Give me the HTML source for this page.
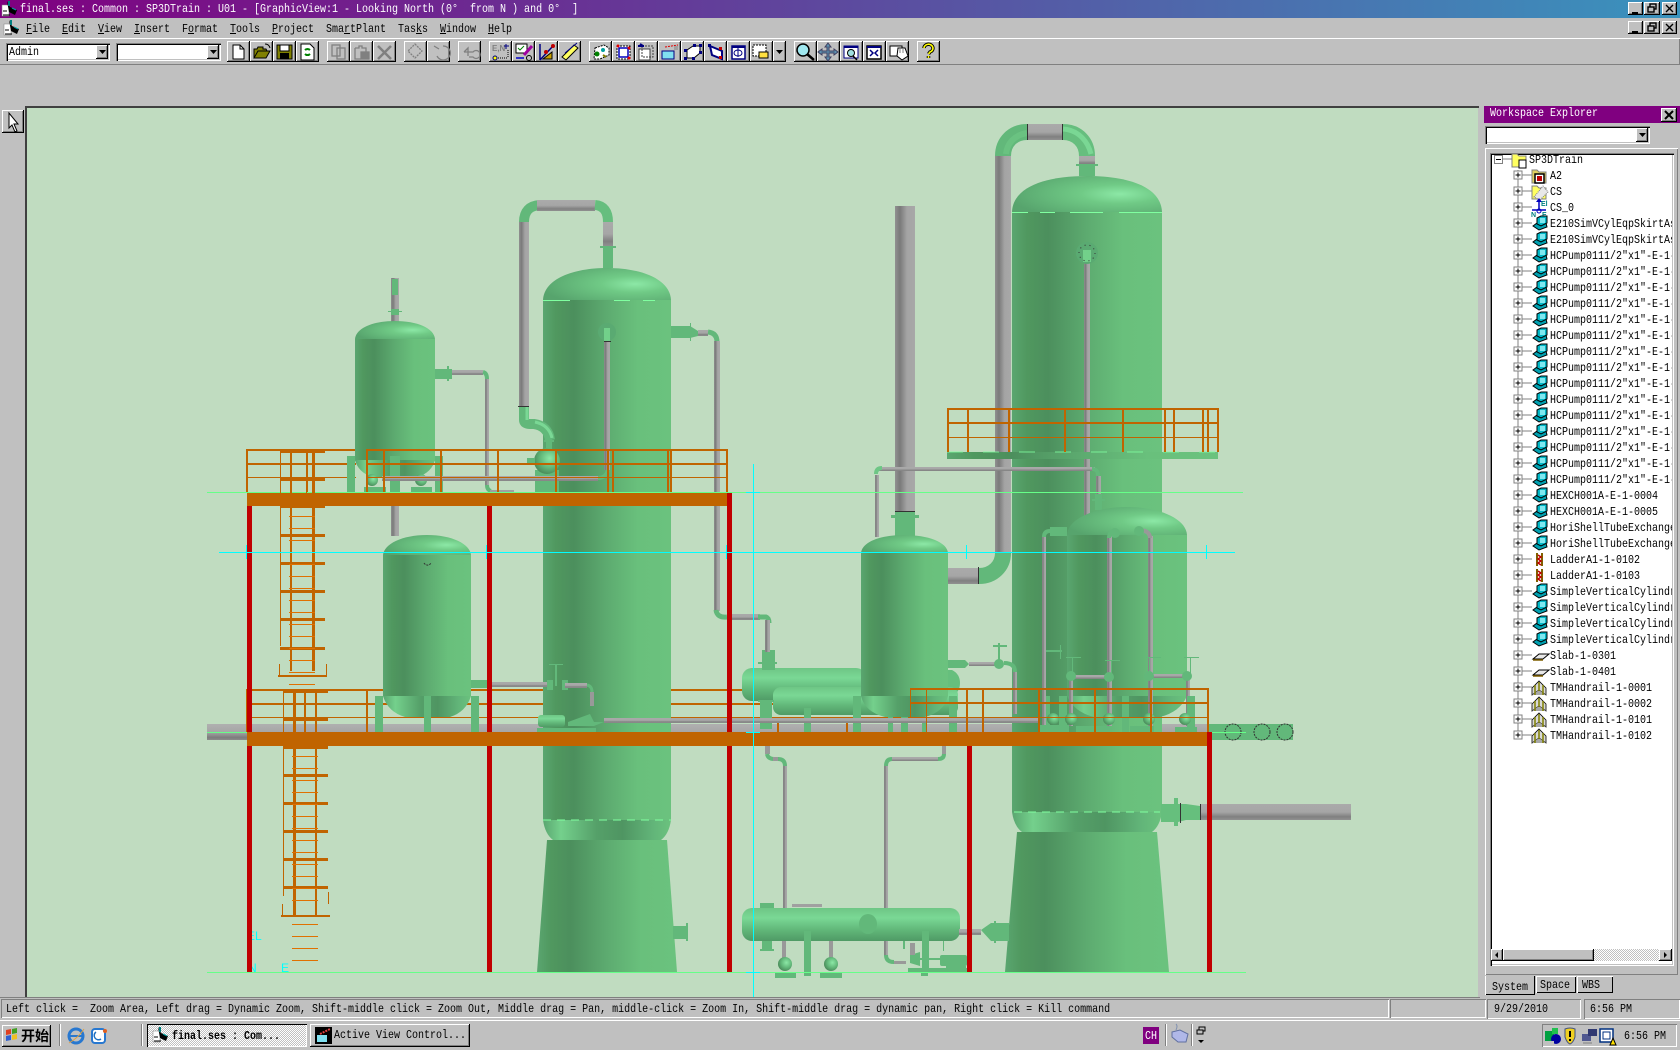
<!DOCTYPE html>
<html><head><meta charset="utf-8"><title>final.ses</title>
<style>
html,body{margin:0;padding:0;width:1680px;height:1050px;overflow:hidden;background:#c0c0c0}
#s{position:absolute;left:0;top:0}
.t{position:absolute;font:12px/14px "Liberation Mono","Noto Sans CJK SC",monospace;color:#000;white-space:pre;transform:scaleX(.8333);transform-origin:0 0}
.w{color:#fff}
.bd{font-weight:bold}
.btn{position:absolute;background:#c0c0c0;box-shadow:inset -1px -1px #000,inset 1px 1px #fff,inset -2px -2px #808080}
.sk{position:absolute;box-shadow:inset 1px 1px #808080,inset -1px -1px #fff}
.box{position:absolute;background:#fff;box-shadow:inset 1px 1px #808080,inset 2px 2px #000,inset -1px -1px #fff,inset -2px -2px #c0c0c0}
.hatch{background:conic-gradient(#fff 25%,#c0c0c0 0 50%,#fff 0 75%,#c0c0c0 0) 0 0/2px 2px}
</style></head><body>

<svg id="s" width="1680" height="1050" viewBox="0 0 1680 1050" xmlns="http://www.w3.org/2000/svg">
<defs>
<linearGradient id="title" x1="0" x2="1" y1="0" y2="0"><stop offset="0" stop-color="#800080"/><stop offset="1" stop-color="#3a93bd"/></linearGradient>
<linearGradient id="vg" x1="0" x2="1" y1="0" y2="0"><stop offset="0" stop-color="#5aa670"/><stop offset=".1" stop-color="#50985f"/><stop offset=".24" stop-color="#4c8f5d"/><stop offset=".5" stop-color="#5dab70"/><stop offset=".74" stop-color="#69c07c"/><stop offset="1" stop-color="#6bc27e"/></linearGradient>
<radialGradient id="top" cx=".72" cy=".5" r=".75"><stop offset="0" stop-color="#8ce8a6"/><stop offset=".35" stop-color="#70ca86"/><stop offset="1" stop-color="#57a46d"/></radialGradient>
<linearGradient id="bot" x1="0" x2="1" y1="0" y2="0"><stop offset="0" stop-color="#5aa670"/><stop offset=".14" stop-color="#74d08c"/><stop offset=".42" stop-color="#55a069"/><stop offset=".62" stop-color="#4f9562"/><stop offset=".86" stop-color="#62b579"/><stop offset="1" stop-color="#6bc27e"/></linearGradient>
<radialGradient id="sph" cx=".6" cy=".4" r=".6"><stop offset="0" stop-color="#8ce8a6"/><stop offset=".6" stop-color="#62b87a"/><stop offset="1" stop-color="#4c8f5d"/></radialGradient>
<linearGradient id="gv" x1="0" x2="1" y1="0" y2="0"><stop offset="0" stop-color="#909090"/><stop offset=".25" stop-color="#7a7a7a"/><stop offset=".6" stop-color="#a4a4a4"/><stop offset="1" stop-color="#a8a8a8"/></linearGradient>
<linearGradient id="gh" x1="0" x2="0" y1="0" y2="1"><stop offset="0" stop-color="#aaa"/><stop offset=".5" stop-color="#a6a6a6"/><stop offset=".8" stop-color="#808080"/><stop offset="1" stop-color="#909090"/></linearGradient>
<linearGradient id="duct" x1="0" x2="0" y1="0" y2="1"><stop offset="0" stop-color="#b0b0b0"/><stop offset=".5" stop-color="#a6a6a6"/><stop offset=".85" stop-color="#7c7c7c"/><stop offset="1" stop-color="#8c8c8c"/></linearGradient>
<linearGradient id="gy" x1="0" x2="0" y1="0" y2="1"><stop offset="0" stop-color="#6ec685"/><stop offset=".3" stop-color="#7ad895"/><stop offset=".65" stop-color="#62b87a"/><stop offset="1" stop-color="#4f9a65"/></linearGradient>
<g id="eq"><path d="M1 11 L5 8 L14 8 L15 12 L7 15 Z" fill="#00a0b0" stroke="#000"/><path d="M5 3 L9 1 L15 1 L15 8 L9 11 L5 9 Z" fill="#00b8c8" stroke="#000"/><rect x="8" y="3" width="5" height="5" fill="#7fe8f0"/></g>
<g id="lad"><rect x="0" y="0" width="2" height="13" fill="#806000"/><rect x="5" y="0" width="2" height="13" fill="#806000"/><path d="M2 2 L5 4 L2 6 L5 8 L2 10 L5 12" stroke="#c00000" stroke-width="1.500" fill="none"/></g>
<g id="sl"><path d="M1 12 L7 7 L17 7 L11 12 Z" fill="#e8e8e8" stroke="#000"/><path d="M1 13 H11" stroke="#806000" stroke-width="1.500"/></g>
<g id="hr"><path d="M1 15 L8 10 L15 15 V8 L8 1 L1 8 Z" fill="#d8d8d8" stroke="#000" stroke-width=".8"/><path d="M8 10 L1 15 H15 Z" fill="#a8a8a8"/><path d="M4 5 V15 M8 2 V11 M12 5 V15" stroke="#808000" stroke-width="1.500"/></g>
<g id="pl"><rect x=".5" y=".5" width="8" height="8" fill="#fff" stroke="#808080"/><path d="M2 4.500 H7 M4.500 2 V7" stroke="#000"/></g>
</defs>

<!-- title / menu -->
<rect x="0" y="0" width="1680" height="18" fill="url(#title)"/>
<rect x="0" y="38" width="1680" height="1" fill="#fff"/>
<rect x="0" y="64" width="1680" height="1" fill="#808080"/>
<rect x="1679" y="39" width="1" height="26" fill="#808080"/>
<g id="logo"><rect x="2" y="5" width="7" height="11" fill="#fff" stroke="#808080" stroke-width=".5"/><path d="M3 15 H10 M3 11 H7" stroke="#000"/><path d="M7 1 L10 7 L17 10 L15 15 L9 12 Z" fill="#000"/><path d="M9 1 V6" stroke="#008080" stroke-width="2"/><path d="M12 8 L16 10" stroke="#00a0a0"/></g>
<use href="#logo" x="2" y="19"/>

<!-- viewport -->
<rect x="24" y="106" width="1456" height="892" fill="#c0c0c0"/>
<rect x="25" y="106" width="1454" height="2" fill="#404040"/>
<rect x="25" y="106" width="2" height="891" fill="#404040"/>
<rect x="27" y="108" width="1451" height="889" fill="#c0dcc0"/>
<rect x="0" y="997" width="1480" height="1" fill="#808080"/>

<svg x="27" y="108" width="1451" height="889" viewBox="27 108 1451 889">
<!-- duct -->
<rect x="207" y="724" width="1002" height="16" fill="url(#duct)"/>
<!-- lower-left rails (behind) -->
<g fill="#c06400">
<rect x="247" y="689" width="663" height="2"/><rect x="247" y="703" width="663" height="2"/><rect x="247" y="717" width="663" height="1"/>
<rect x="246" y="689" width="1" height="43"/><rect x="366" y="689" width="2" height="43"/>
<rect x="777" y="717" width="2" height="15"/><rect x="846" y="717" width="2" height="15"/>
</g>
<!-- upper-left rail behind -->
<g fill="#c06400"><rect x="246" y="449" width="110" height="2"/><rect x="246" y="463" width="110" height="2"/><rect x="246" y="477" width="110" height="1"/><rect x="246" y="449" width="2" height="44"/><rect x="306" y="449" width="2" height="44"/></g>

<!-- Vessel D tower -->
<path d="M1017 832 H1157 L1169 972 H1005 Z" fill="url(#vg)"/>
<path d="M1012 812 Q1014 826 1022 832 H1152 Q1160 826 1162 812 Z" fill="url(#bot)"/>
<rect x="1012" y="212" width="150" height="600" fill="url(#vg)"/>
<path d="M1012 212 C1013 187 1045 176 1087 176 C1129 176 1161 187 1162 212 Z" fill="url(#top)"/>
<g fill="#80ffa0"><rect x="1012" y="212" width="16" height="1"/><rect x="1040" y="212" width="15" height="1"/><rect x="1070" y="212" width="33" height="1"/><rect x="1119" y="212" width="43" height="1"/></g>
<path d="M1014 812 H1160" stroke="#80ffa0" stroke-dasharray="8 6"/>
<rect x="1084" y="262" width="6" height="270" fill="url(#gv)"/>
<circle cx="1087" cy="253" r="11" fill="#5aaa72"/><rect x="1083" y="250" width="8" height="12" fill="#72d08a"/>
<circle cx="1087" cy="253" r="8" fill="none" stroke="#333" stroke-dasharray="1 4"/>

<!-- Overhead D -->
<rect x="995" y="156" width="16" height="398" fill="url(#gv)"/>
<path d="M1003 156 C1003 142 1013 132 1027 132" fill="none" stroke="#62b87a" stroke-width="16"/>
<path d="M1006 154 C1007 143 1015 135 1027 133" fill="none" stroke="#6ec685" stroke-width="6" opacity=".7"/>
<rect x="1027" y="124" width="36" height="16" fill="url(#gh)"/>
<rect x="1027" y="124" width="1" height="16" fill="#333"/><rect x="1062" y="124" width="1" height="16" fill="#333"/>
<path d="M1063 132 C1077 132 1087 142 1087 156" fill="none" stroke="#66be7e" stroke-width="16"/>
<path d="M1063 129 C1079 130 1088 142 1091 154" fill="none" stroke="#80dd9a" stroke-width="5" opacity=".8"/>
<rect x="1079" y="156" width="16" height="9" fill="url(#gh)"/>
<rect x="1079" y="165" width="16" height="11" fill="#62b87a"/><rect x="1076" y="164" width="22" height="2" fill="#62b87a"/>

<!-- stack + Vessel E -->
<rect x="895" y="206" width="20" height="305" fill="url(#gv)"/>
<rect x="895" y="511" width="20" height="1" fill="#333"/>
<rect x="895" y="512" width="20" height="24" fill="#62b87a"/>
<rect x="891" y="515" width="28" height="3" fill="#62b87a"/>
<rect x="948" y="568" width="30" height="16" fill="url(#gh)"/>
<rect x="978" y="567" width="1" height="17" fill="#333"/>
<path d="M979 576 C993 576 1003 566 1003 553" fill="none" stroke="#62b87a" stroke-width="16"/>

<!-- horizontal line & pipes above E -->
<rect x="877" y="467" width="218" height="4" fill="url(#gh)"/>
<rect x="875" y="475" width="4" height="62" fill="url(#gv)"/>
<path d="M876 474 Q876 468 882 468" fill="none" stroke="#6ec685" stroke-width="4"/>
<path d="M1092 469 C1097 469 1098 472 1098 476" fill="none" stroke="#62b87a" stroke-width="4"/>
<rect x="1096" y="476" width="5" height="22" fill="url(#gv)"/>
<rect x="1095" y="494" width="7" height="16" fill="#62b87a"/><rect x="1092" y="499" width="13" height="2" fill="#62b87a"/>

<!-- exchangers behind E -->
<rect x="742" y="668" width="124" height="33" rx="10" fill="url(#gy)"/>
<path d="M945 670 H952 Q960 674 960 683 Q960 692 952 696 H945 Z" fill="#66bf7d"/>
<rect x="773" y="687" width="185" height="28" rx="8" fill="url(#gy)"/>
<!-- legs on exchangers -->
<g fill="#62b87a">
<rect x="804" y="708" width="7" height="24"/><rect x="853" y="696" width="8" height="36"/>
<rect x="888" y="717" width="5" height="15"/><rect x="901" y="717" width="7" height="15"/><rect x="922" y="717" width="4" height="15"/>
<rect x="949" y="696" width="8" height="36"/>
<rect x="762" y="650" width="13" height="20"/><rect x="758" y="662" width="19" height="2"/>
<rect x="760" y="701" width="12" height="28"/><rect x="758" y="700" width="16" height="2"/>
</g>

<!-- Vessel E -->
<rect x="861" y="553" width="87" height="143" fill="url(#vg)"/>
<path d="M861 553 C862 542 880 535 904 535 C928 535 947 542 948 553 Z" fill="url(#top)"/>
<path d="M861 696 Q865 712 885 717 H925 Q944 712 948 696 Z" fill="url(#bot)"/>

<!-- A2 tower -->
<path d="M547 840 H667 L677 972 H537 Z" fill="url(#vg)"/>
<path d="M543 820 Q545 834 553 840 H661 Q669 834 671 820 Z" fill="url(#bot)"/>
<rect x="543" y="300" width="128" height="520" fill="url(#vg)"/>
<path d="M543 300 C544 279 573 268 607 268 C641 268 670 279 671 300 Z" fill="url(#top)"/>
<g fill="#80ffa0"><rect x="543" y="300" width="27" height="1"/><rect x="614" y="300" width="16" height="1"/><rect x="643" y="300" width="12" height="1"/></g>
<path d="M543 820 H671" stroke="#80ffa0" stroke-dasharray="8 6"/>
<rect x="673" y="926" width="14" height="13" fill="#62b87a"/><rect x="686" y="923" width="2" height="18" fill="#62b87a"/>
<rect x="604" y="342" width="6" height="128" fill="url(#gv)"/>
<circle cx="607" cy="332" r="9" fill="#5aaa72"/><rect x="604" y="328" width="6" height="14" fill="#72d08a"/>
<rect x="604" y="341" width="7" height="1" fill="#333"/>

<!-- overhead A -->
<rect x="519" y="222" width="10" height="184" fill="url(#gv)"/>
<path d="M524 222 Q524 206 540 205" fill="none" stroke="#62b87a" stroke-width="10"/>
<rect x="537" y="200" width="58" height="11" fill="url(#gh)"/>
<path d="M595 205 Q608 206 608 222" fill="none" stroke="#66be7e" stroke-width="10"/>
<rect x="603" y="222" width="10" height="24" fill="url(#gh)"/>
<rect x="600" y="246" width="16" height="2" fill="#62b87a"/><rect x="603" y="246" width="10" height="22" fill="#62b87a"/>
<path d="M524 406 V420 Q524 424 530 424 H534 Q548 426 550 440" fill="none" stroke="#62b87a" stroke-width="10"/>
<path d="M527 406 V420 M535 422 Q549 425 552 438" fill="none" stroke="#7ad895" stroke-width="3"/>
<rect x="518" y="406" width="11" height="1" fill="#333"/>
<rect x="546" y="438" width="6" height="14" fill="#62b87a"/>
<rect x="544" y="440" width="10" height="2" fill="#62b87a"/>
<rect x="535" y="470" width="24" height="23" fill="#62b87a"/>
<circle cx="547" cy="461" r="13" fill="url(#sph)"/>
<rect x="527" y="458" width="8" height="6" fill="#62b87a"/>

<!-- pipe from A to right -->
<path d="M671 326 H690 L698 331 V336 L690 338 H671 Z" fill="#62b87a"/>
<rect x="690" y="323" width="1" height="18" fill="#62b87a"/>
<rect x="698" y="330" width="10" height="6" fill="url(#gh)"/>
<path d="M708 332 Q717 333 717 342" fill="none" stroke="#62b87a" stroke-width="5"/>
<rect x="714" y="341" width="6" height="270" fill="url(#gv)"/>
<path d="M716 610 Q717 618 727 617" fill="none" stroke="#62b87a" stroke-width="5"/>
<rect x="727" y="614" width="33" height="6" fill="url(#gh)"/>
<path d="M758 617 H766 Q769 618 769 623" fill="none" stroke="#62b87a" stroke-width="5"/>
<rect x="765" y="620" width="5" height="32" fill="url(#gv)"/>

<!-- Vessel B -->
<rect x="391" y="278" width="8" height="44" fill="url(#gv)"/>
<rect x="392" y="279" width="6" height="16" fill="#62b87a"/><rect x="391" y="309" width="8" height="6" fill="#62b87a"/><rect x="388" y="311" width="14" height="1" fill="#62b87a"/>
<rect x="391" y="506" width="8" height="30" fill="url(#gv)"/>
<rect x="355" y="339" width="80" height="122" fill="url(#vg)"/>
<path d="M355 339 C356 328 373 321 395 321 C417 321 434 328 435 339 Z" fill="url(#top)"/>
<path d="M355 460 Q358 472 372 477 H418 Q432 472 435 460 Z" fill="url(#bot)"/>
<g fill="#62b87a">
<rect x="347" y="456" width="8" height="37"/><rect x="390" y="456" width="10" height="37"/><rect x="435" y="456" width="8" height="37"/>
<rect x="364" y="487" width="22" height="6"/><rect x="411" y="487" width="21" height="6"/>
</g>
<circle cx="372" cy="480" r="6" fill="url(#sph)"/><circle cx="421" cy="480" r="6" fill="url(#sph)"/>
<!-- nozzle B pipe -->
<rect x="435" y="369" width="17" height="10" fill="#62b87a"/><rect x="447" y="366" width="2" height="15" fill="#62b87a"/>
<rect x="452" y="370" width="31" height="5" fill="url(#gh)"/>
<path d="M483 372 Q487 373 487 379" fill="none" stroke="#62b87a" stroke-width="4"/>
<rect x="485" y="379" width="4" height="106" fill="url(#gv)"/>
<path d="M487 485 Q487 490 491 491" fill="none" stroke="#62b87a" stroke-width="4"/>
<rect x="490" y="490" width="24" height="3" fill="#a0a0a0"/>
<!-- long horizontal under A -->
<rect x="382" y="476" width="216" height="5" fill="url(#gh)"/>
<path d="M598 478 Q606 478 608 470" fill="none" stroke="#62b87a" stroke-width="4"/>

<!-- upper rails front -->
<g fill="#c06400">
<rect x="366" y="449" width="362" height="2"/><rect x="366" y="463" width="362" height="2"/><rect x="366" y="477" width="362" height="1"/>
<rect x="366" y="449" width="2" height="44"/><rect x="383" y="449" width="2" height="44"/><rect x="440" y="449" width="2" height="44"/><rect x="497" y="449" width="2" height="44"/><rect x="555" y="449" width="2" height="44"/><rect x="607" y="449" width="2" height="44"/><rect x="612" y="449" width="2" height="44"/><rect x="667" y="449" width="2" height="44"/><rect x="670" y="449" width="2" height="44"/><rect x="726" y="449" width="2" height="44"/>
</g>

<!-- Vessel C -->
<rect x="375" y="696" width="8" height="36" fill="#62b87a"/>
<rect x="471" y="696" width="8" height="36" fill="#62b87a"/>
<rect x="383" y="555" width="88" height="141" fill="url(#vg)"/>
<path d="M383 555 C384 544 402 535 427 535 C452 535 470 544 471 555 Z" fill="url(#top)"/>
<path d="M383 696 Q388 712 405 717 H450 Q466 712 471 696 Z" fill="url(#bot)"/>
<rect x="424" y="696" width="7" height="36" fill="#62b87a"/>
<path d="M424 563 A4 4 0 0 0 431 563" fill="none" stroke="#333" stroke-dasharray="2 1"/>

<!-- pipes right of C -->
<rect x="471" y="680" width="16" height="8" fill="#62b87a"/>
<rect x="492" y="682" width="56" height="5" fill="url(#gh)"/>
<g fill="#62b87a">
<rect x="555" y="664" width="2" height="22"/><rect x="549" y="664" width="14" height="1"/>
<rect x="547" y="680" width="6" height="10"/><rect x="562" y="680" width="6" height="10"/>
</g>
<rect x="565" y="683" width="22" height="5" fill="url(#gh)"/>
<path d="M587 685 Q592 686 592 692" fill="none" stroke="#62b87a" stroke-width="3"/>
<rect x="590" y="692" width="4" height="14" fill="#999"/>
<path d="M568 722 L590 714 L594 722 L604 722 L594 726 H568 Z" fill="#62b87a"/>
<rect x="538" y="715" width="27" height="12" rx="3" fill="url(#gy)"/>
<rect x="537" y="728" width="59" height="4" fill="#62b87a"/>
<rect x="604" y="718" width="434" height="5" fill="url(#gh)"/>

<!-- right-hand F vessel -->
<g fill="#62b87a"><rect x="1042" y="696" width="8" height="36"/></g>
<rect x="1042" y="536" width="4" height="190" fill="url(#gv)"/>
<path d="M1044 537 Q1044 531 1050 531" fill="none" stroke="#62b87a" stroke-width="4"/>
<path d="M1050 527 H1067 V536 H1050 Z" fill="#62b87a"/>
<rect x="1067" y="535" width="120" height="161" fill="url(#vg)"/>
<path d="M1067 535 C1068 518 1096 507 1127 507 C1158 507 1186 518 1187 535 Z" fill="url(#top)"/>
<path d="M1067 696 Q1074 712 1094 717 H1160 Q1180 712 1187 696 Z" fill="url(#bot)"/>
<rect x="1107" y="536" width="5" height="190" fill="url(#gv)"/>
<path d="M1109 538 Q1109 532 1115 531" fill="none" stroke="#62b87a" stroke-width="4"/>
<rect x="1148" y="536" width="5" height="190" fill="url(#gv)"/>
<path d="M1150 538 Q1150 531 1140 530" fill="none" stroke="#999" stroke-width="4"/>
<circle cx="1115" cy="533" r="5" fill="#62b87a"/><circle cx="1139" cy="531" r="5" fill="#62b87a"/>
<rect x="1069" y="680" width="4" height="46" fill="url(#gv)"/>
<rect x="1186" y="680" width="4" height="46" fill="url(#gv)"/>
<rect x="1075" y="675" width="32" height="4" fill="url(#gh)"/>
<rect x="1150" y="674" width="36" height="4" fill="url(#gh)"/>
<g fill="#62b87a">
<circle cx="1071" cy="676" r="5"/><circle cx="1109" cy="677" r="5"/><circle cx="1149" cy="676" r="5"/><circle cx="1187" cy="676" r="5"/>
<rect x="1059" y="696" width="8" height="36"/><rect x="1122" y="696" width="7" height="36"/><rect x="1187" y="696" width="8" height="36"/>
<rect x="1066" y="657" width="15" height="1"/><rect x="1105" y="660" width="15" height="1"/><rect x="1146" y="657" width="15" height="1"/><rect x="1184" y="657" width="15" height="1"/>
<rect x="1072" y="657" width="1" height="18"/><rect x="1111" y="660" width="1" height="16"/><rect x="1149" y="657" width="1" height="16"/><rect x="1190" y="657" width="1" height="16"/>
<rect x="1039" y="725" width="30" height="7"/><rect x="1076" y="726" width="34" height="6"/><rect x="1130" y="726" width="24" height="6"/><rect x="1175" y="727" width="22" height="5"/>
<rect x="1046" y="650" width="16" height="2"/><rect x="1060" y="645" width="1" height="14"/>
</g>
<circle cx="1053" cy="719" r="6" fill="url(#sph)"/><circle cx="1071" cy="719" r="6" fill="url(#sph)"/><circle cx="1109" cy="719" r="6" fill="url(#sph)"/><circle cx="1149" cy="719" r="6" fill="url(#sph)"/><circle cx="1185" cy="719" r="6" fill="url(#sph)"/>
<!-- top-right rail -->
<rect x="947" y="452" width="271" height="7" fill="url(#vg)"/>
<path d="M947 452 H1218" stroke="#80ffa0" stroke-dasharray="16 20" opacity=".8"/>
<g fill="#c06400">
<rect x="947" y="408" width="272" height="2"/><rect x="947" y="422" width="272" height="2"/><rect x="947" y="437" width="272" height="1"/>
<rect x="947" y="408" width="2" height="44"/><rect x="967" y="408" width="2" height="44"/><rect x="1008" y="408" width="2" height="44"/><rect x="1064" y="408" width="2" height="44"/><rect x="1122" y="408" width="2" height="44"/><rect x="1164" y="408" width="2" height="44"/><rect x="1173" y="408" width="2" height="44"/><rect x="1202" y="408" width="2" height="44"/><rect x="1207" y="408" width="2" height="44"/><rect x="1217" y="408" width="2" height="44"/>
</g>

<!-- valve top right of E -->
<path d="M948 660 H965 L969 664 L965 668 H948 Z" fill="#62b87a"/>
<rect x="969" y="662" width="29" height="4" fill="url(#gh)"/>
<rect x="998" y="643" width="2" height="18" fill="#62b87a"/><rect x="993" y="645" width="14" height="2" fill="#62b87a"/>
<circle cx="999" cy="664" r="5" fill="#62b87a"/>
<path d="M1004 663 Q1015 663 1015 672" fill="none" stroke="#62b87a" stroke-width="4"/>
<rect x="1013" y="672" width="4" height="42" fill="url(#gv)"/>

<!-- lower right rails -->
<g fill="#c06400">
<rect x="910" y="688" width="298" height="2"/><rect x="910" y="702" width="298" height="2"/><rect x="910" y="717" width="298" height="1"/>
<rect x="910" y="688" width="1" height="30"/><rect x="926" y="688" width="1" height="44"/><rect x="966" y="688" width="2" height="44"/><rect x="982" y="688" width="2" height="44"/><rect x="1038" y="688" width="2" height="44"/><rect x="1094" y="688" width="2" height="44"/><rect x="1150" y="688" width="2" height="44"/><rect x="1207" y="688" width="2" height="44"/>
</g>

<!-- far right small pipes -->
<rect x="1209" y="724" width="84" height="16" fill="#62b87a"/>
<g fill="#62b87a" stroke="#333" stroke-dasharray="2 1"><circle cx="1233" cy="732" r="8"/><circle cx="1262" cy="732" r="8"/><circle cx="1285" cy="732" r="8"/></g>

<!-- under platform pipes -->
<rect x="765" y="746" width="5" height="8" fill="#999"/>
<path d="M767 754 Q768 759 774 759" fill="none" stroke="#62b87a" stroke-width="4"/>
<rect x="773" y="757" width="6" height="4" fill="#999"/>
<path d="M778 759 Q785 759 785 766" fill="none" stroke="#62b87a" stroke-width="4"/>
<rect x="783" y="766" width="4" height="144" fill="url(#gv)"/>
<rect x="942" y="746" width="4" height="8" fill="#999"/>
<path d="M944 754 Q944 759 938 759" fill="none" stroke="#62b87a" stroke-width="4"/>
<rect x="892" y="757" width="46" height="4" fill="url(#gh)"/>
<path d="M892 759 Q886 759 886 766" fill="none" stroke="#62b87a" stroke-width="4"/>
<rect x="884" y="766" width="4" height="190" fill="url(#gv)"/>
<path d="M886 955 Q886 962 894 962" fill="none" stroke="#62b87a" stroke-width="4"/>
<rect x="894" y="961" width="12" height="3" fill="#999"/>

<!-- lower exchanger -->
<rect x="792" y="904" width="30" height="3" fill="#a0a0a0"/>
<rect x="760" y="903" width="14" height="5" fill="#62b87a"/><rect x="763" y="908" width="8" height="4" fill="#62b87a"/>
<rect x="760" y="949" width="14" height="2" fill="#62b87a"/>
<rect x="762" y="941" width="10" height="9" fill="#62b87a"/>
<rect x="782" y="941" width="4" height="22" fill="#999"/>
<rect x="829" y="941" width="4" height="22" fill="#999"/>
<rect x="742" y="908" width="218" height="33" rx="10" fill="url(#gy)"/>
<ellipse cx="868" cy="924" rx="9" ry="10" fill="#62b87a"/>
<g fill="#62b87a">
<rect x="804" y="931" width="7" height="45"/><rect x="922" y="931" width="7" height="37"/>
<rect x="775" y="973" width="21" height="5"/><rect x="820" y="973" width="22" height="5"/>
<rect x="908" y="968" width="59" height="4"/>
<path d="M910 955 L920 952 V966 L910 963 Z"/>
<rect x="920" y="958" width="20" height="2"/>
<rect x="940" y="955" width="27" height="11" rx="2"/>
<rect x="946" y="966" width="20" height="3"/>
<rect x="943" y="941" width="1" height="10"/><rect x="903" y="941" width="2" height="8"/>
<rect x="921" y="972" width="7" height="4"/>
</g>
<circle cx="785" cy="964" r="7" fill="url(#sph)"/><circle cx="831" cy="964" r="7" fill="url(#sph)"/>
<rect x="910" y="943" width="5" height="12" fill="#999"/>
<rect x="959" y="929" width="22" height="6" fill="url(#gh)"/>
<path d="M981 930 L991 923 H1009 V941 H991 Z" fill="#62b87a"/><rect x="994" y="921" width="2" height="22" fill="#62b87a"/>

<!-- D right nozzle -->
<path d="M1161 804 H1174 V798 H1178 V804 H1186 L1200 806 V820 H1186 L1178 822 V826 H1174 V822 H1161 Z" fill="#66bf7d"/>
<rect x="1180" y="803" width="1" height="20" fill="#333"/>
<rect x="1200" y="804" width="151" height="16" fill="url(#gh)"/>
<rect x="1200" y="804" width="1" height="16" fill="#333"/>

<!-- cyan & green lines -->
<g fill="#66ff88">
<rect x="207" y="492" width="1036" height="1"/>
<rect x="207" y="732" width="40" height="1"/>
<rect x="1208" y="732" width="38" height="1"/>
<rect x="207" y="972" width="1039" height="1"/>
</g>

<text x="247" y="940" font-family="Liberation Sans" font-size="12" fill="#00ffff">EL</text>
<text x="248" y="972" font-family="Liberation Sans" font-size="12" fill="#00ffff">N</text>
<text x="281" y="972" font-family="Liberation Sans" font-size="12" fill="#00ffff">E</text>

<!-- platforms -->
<rect x="247" y="493" width="480" height="13" fill="#c06400"/>
<g fill="#c00000">
<rect x="247" y="506" width="5" height="226"/><rect x="247" y="746" width="5" height="226"/>
<rect x="487" y="506" width="5" height="226"/><rect x="487" y="746" width="5" height="226"/>
<rect x="727" y="493" width="5" height="239"/><rect x="727" y="746" width="5" height="226"/>
<rect x="967" y="746" width="5" height="226"/>
<rect x="1207" y="732" width="5" height="240"/>
</g>
<rect x="247" y="732" width="960" height="14" fill="#c06400"/>

<!-- ladders -->
<g fill="#c06400">
<rect x="280" y="451" width="1" height="195"/><rect x="290" y="451" width="2" height="220"/><rect x="312" y="451" width="3" height="220"/><rect x="306" y="451" width="1" height="42"/>
<rect x="280" y="449" width="45" height="4"/><rect x="280" y="477" width="45" height="4"/><rect x="280" y="505" width="45" height="3"/><rect x="280" y="534" width="45" height="3"/><rect x="280" y="562" width="45" height="3"/><rect x="280" y="590" width="45" height="3"/><rect x="280" y="618" width="45" height="3"/><rect x="280" y="647" width="45" height="3"/>
<rect x="278" y="675" width="49" height="2"/><rect x="279" y="664" width="1" height="12"/><rect x="326" y="664" width="1" height="12"/>
<rect x="283" y="691" width="1" height="205"/><rect x="293" y="691" width="3" height="225"/><rect x="315" y="691" width="2" height="225"/><rect x="304" y="691" width="2" height="42"/>
<rect x="283" y="690" width="45" height="3"/><rect x="283" y="718" width="45" height="3"/><rect x="283" y="746" width="45" height="3"/><rect x="283" y="774" width="45" height="3"/><rect x="283" y="802" width="45" height="3"/><rect x="283" y="830" width="45" height="3"/><rect x="283" y="858" width="45" height="3"/><rect x="283" y="886" width="45" height="3"/>
<rect x="281" y="915" width="49" height="2"/><rect x="282" y="904" width="1" height="11"/><rect x="328" y="892" width="1" height="12"/>
</g>
<g fill="#e07000">
<rect x="289" y="516" width="26" height="1"/><rect x="289" y="528" width="26" height="1"/><rect x="289" y="540" width="26" height="1"/><rect x="289" y="552" width="26" height="1"/><rect x="289" y="564" width="26" height="1"/><rect x="289" y="576" width="26" height="1"/><rect x="289" y="588" width="26" height="1"/><rect x="289" y="600" width="26" height="1"/><rect x="289" y="612" width="26" height="1"/><rect x="289" y="624" width="26" height="1"/><rect x="289" y="636" width="26" height="1"/><rect x="289" y="648" width="26" height="1"/><rect x="289" y="660" width="26" height="1"/><rect x="289" y="672" width="26" height="1"/><rect x="289" y="684" width="26" height="1"/>
<rect x="292" y="756" width="26" height="1"/><rect x="292" y="768" width="26" height="1"/><rect x="292" y="780" width="26" height="1"/><rect x="292" y="792" width="26" height="1"/><rect x="292" y="804" width="26" height="1"/><rect x="292" y="816" width="26" height="1"/><rect x="292" y="828" width="26" height="1"/><rect x="292" y="840" width="26" height="1"/><rect x="292" y="852" width="26" height="1"/><rect x="292" y="864" width="26" height="1"/><rect x="292" y="876" width="26" height="1"/><rect x="292" y="888" width="26" height="1"/><rect x="292" y="900" width="26" height="1"/>
<rect x="292" y="924" width="26" height="1"/><rect x="292" y="936" width="26" height="1"/><rect x="292" y="948" width="26" height="1"/><rect x="292" y="960" width="26" height="1"/>
</g>

<!-- cyan -->
<g fill="#00ffff">
<rect x="219" y="552" width="1016" height="1"/>
<rect x="753" y="464" width="1" height="533"/>
<rect x="746" y="492" width="14" height="1"/><rect x="746" y="732" width="14" height="1"/><rect x="746" y="972" width="14" height="1"/>
<rect x="246" y="545" width="1" height="14"/><rect x="486" y="545" width="1" height="14"/><rect x="726" y="545" width="1" height="14"/><rect x="966" y="545" width="1" height="14"/><rect x="1206" y="545" width="1" height="14"/>
</g>
</svg>

<!-- right panel background lines -->
<rect x="1484" y="106" width="196" height="17" fill="#800080"/>
</svg>

<!-- window buttons -->
<div class="btn" style="left:1628px;top:2px;width:15px;height:13px"></div>
<div class="btn" style="left:1644px;top:2px;width:16px;height:13px"></div>
<div class="btn" style="left:1662px;top:2px;width:15px;height:13px"></div>
<div class="btn" style="left:1628px;top:21px;width:15px;height:13px"></div>
<div class="btn" style="left:1644px;top:21px;width:16px;height:13px"></div>
<div class="btn" style="left:1662px;top:21px;width:15px;height:13px"></div>

<!-- comboboxes -->
<div class="box" style="left:6px;top:43px;width:104px;height:18px"></div>
<div class="btn" style="left:96px;top:45px;width:12px;height:14px"></div>
<div class="box" style="left:116px;top:43px;width:105px;height:18px"></div>
<div class="btn" style="left:207px;top:45px;width:12px;height:14px"></div>

<!-- toolbar buttons -->
<div class="btn" style="left:227px;top:41px;width:23px;height:21px"></div>
<div class="btn" style="left:250px;top:41px;width:23px;height:21px"></div>
<div class="btn" style="left:273px;top:41px;width:23px;height:21px"></div>
<div class="btn" style="left:296px;top:41px;width:23px;height:21px"></div>
<div class="btn" style="left:327px;top:41px;width:23px;height:21px"></div>
<div class="btn" style="left:350px;top:41px;width:23px;height:21px"></div>
<div class="btn" style="left:373px;top:41px;width:23px;height:21px"></div>
<div class="btn" style="left:404px;top:41px;width:23px;height:21px"></div>
<div class="btn" style="left:427px;top:41px;width:23px;height:21px"></div>
<div class="btn" style="left:458px;top:41px;width:23px;height:21px"></div>
<div class="btn" style="left:489px;top:41px;width:23px;height:21px"></div>
<div class="btn" style="left:512px;top:41px;width:23px;height:21px"></div>
<div class="btn" style="left:535px;top:41px;width:23px;height:21px"></div>
<div class="btn" style="left:558px;top:41px;width:23px;height:21px"></div>
<div class="btn" style="left:589px;top:41px;width:23px;height:21px"></div>
<div class="btn" style="left:612px;top:41px;width:23px;height:21px"></div>
<div class="btn" style="left:635px;top:41px;width:23px;height:21px"></div>
<div class="btn" style="left:658px;top:41px;width:23px;height:21px"></div>
<div class="btn" style="left:681px;top:41px;width:23px;height:21px"></div>
<div class="btn" style="left:704px;top:41px;width:23px;height:21px"></div>
<div class="btn" style="left:727px;top:41px;width:23px;height:21px"></div>
<div class="btn" style="left:750px;top:41px;width:23px;height:21px"></div>
<div class="btn" style="left:773px;top:41px;width:13px;height:21px"></div>
<div class="btn" style="left:794px;top:41px;width:23px;height:21px"></div>
<div class="btn" style="left:817px;top:41px;width:23px;height:21px"></div>
<div class="btn" style="left:840px;top:41px;width:23px;height:21px"></div>
<div class="btn" style="left:863px;top:41px;width:23px;height:21px"></div>
<div class="btn" style="left:886px;top:41px;width:23px;height:21px"></div>
<div class="btn" style="left:917px;top:41px;width:23px;height:21px"></div>
<div class="btn" style="left:2px;top:110px;width:22px;height:23px"></div>

<!-- right panel -->
<div class="btn" style="left:1661px;top:108px;width:16px;height:14px"></div>
<div class="box" style="left:1485px;top:126px;width:165px;height:18px"></div>
<div class="btn" style="left:1636px;top:128px;width:12px;height:14px"></div>
<div style="position:absolute;left:1485px;top:148px;width:193px;height:827px;box-shadow:inset 1px 1px #fff,inset -1px -1px #808080"></div>
<div class="box" style="left:1490px;top:153px;width:184px;height:813px"></div>

<!-- scrollbar -->
<div class="hatch" style="position:absolute;left:1503px;top:949px;width:156px;height:12px"></div>
<div class="btn" style="left:1491px;top:949px;width:12px;height:12px"></div>
<div class="btn" style="left:1503px;top:949px;width:91px;height:12px"></div>
<div class="btn" style="left:1659px;top:949px;width:13px;height:12px"></div>

<!-- tabs -->
<div style="position:absolute;left:1485px;top:976px;width:50px;height:19px;background:#c0c0c0;box-shadow:inset 1px 0 #fff,inset -1px -1px #000"></div>
<div style="position:absolute;left:1536px;top:976px;width:40px;height:17px;background:#c0c0c0;box-shadow:inset 1px 1px #fff,inset -1px -1px #000"></div>
<div style="position:absolute;left:1577px;top:976px;width:36px;height:17px;background:#c0c0c0;box-shadow:inset 1px 1px #fff,inset -1px -1px #000"></div>

<!-- status bar -->
<div class="sk" style="left:1px;top:999px;width:1388px;height:19px"></div>
<div class="sk" style="left:1390px;top:999px;width:96px;height:19px"></div>
<div class="sk" style="left:1487px;top:999px;width:94px;height:20px"></div>
<div class="sk" style="left:1584px;top:999px;width:96px;height:20px"></div>

<!-- taskbar -->
<div style="position:absolute;left:0;top:1020px;width:1680px;height:30px;background:#c0c0c0;box-shadow:inset 0 1px #fff"></div>
<div class="btn" style="left:2px;top:1025px;width:49px;height:22px"></div>
<div class="sk" style="left:59px;top:1024px;width:2px;height:22px;box-shadow:inset 1px 0 #808080,inset -1px 0 #fff"></div>
<div class="sk" style="left:141px;top:1024px;width:2px;height:22px;box-shadow:inset 1px 0 #808080,inset -1px 0 #fff"></div>
<div class="hatch" style="position:absolute;left:147px;top:1024px;width:160px;height:23px;box-shadow:inset 1px 1px #000,inset -1px -1px #fff"></div>
<div class="btn" style="left:310px;top:1024px;width:160px;height:23px"></div>
<div class="sk" style="left:1542px;top:1024px;width:135px;height:23px"></div>
<div style="position:absolute;left:1165px;top:1024px;width:2px;height:22px;box-shadow:inset 1px 0 #808080,inset -1px 0 #fff"></div>
<div style="position:absolute;left:1191px;top:1024px;width:2px;height:22px;box-shadow:inset 1px 0 #808080,inset -1px 0 #fff"></div>
<div style="position:absolute;left:1143px;top:1027px;width:16px;height:17px;background:#800080"></div>

<!-- icon overlay -->
<svg style="position:absolute;left:0;top:0" width="1680" height="1050" viewBox="0 0 1680 1050">
<!-- window glyphs -->
<g fill="none" stroke="#000" stroke-width="1.400">
<path d="M1632 13 H1638" stroke-width="2"/><rect x="1650" y="4" width="6" height="5"/><rect x="1648" y="7" width="6" height="5" fill="#c0c0c0"/><path d="M1666 5 L1673 12 M1673 5 L1666 12"/>
<path d="M1632 32 H1638" stroke-width="2"/><rect x="1650" y="23" width="6" height="5"/><rect x="1648" y="26" width="6" height="5" fill="#c0c0c0"/><path d="M1666 24 L1673 31 M1673 24 L1666 31"/>
<path d="M1665 111 L1673 119 M1673 111 L1665 119" stroke-width="2"/>
</g>
<!-- combobox arrows -->
<g fill="#000"><path d="M99 50 h7 l-3.500 4 z"/><path d="M210 50 h7 l-3.500 4 z"/><path d="M1639 133 h7 l-3.500 4 z"/><path d="M776 50 h7 l-3.500 4 z"/></g>
<!-- active toolbar icons -->
<path d="M233 45 h7 l4 4 v10 h-11 z" fill="#fff" stroke="#000"/><path d="M240 45 v4 h4" fill="none" stroke="#000"/>
<path d="M254 58 V49 h3 l1-2 h5 v2 h3 l1 2 M254 58 L258 51 H270 L266 58 Z" fill="#808000" stroke="#000"/>
<path d="M265 44 Q269 44 270 48" stroke="#000" fill="none"/>
<rect x="277" y="45" width="15" height="14" fill="#808000" stroke="#000"/><rect x="280" y="45" width="9" height="6" fill="#fff" stroke="#000"/><rect x="280" y="53" width="9" height="6" fill="#000"/>
<path d="M301 44 h9 l4 4 v12 h-13 z" fill="#fff" stroke="#000"/><path d="M305 50 a3.500 3.500 0 0 1 5 0 M310 54 a3.500 3.500 0 0 1 -5 0" stroke="#008000" stroke-width="2" fill="none"/>
<!-- disabled icons -->
<g fill="none" stroke="#808080" stroke-width="1.300">
<rect x="332" y="45" width="8" height="11"/><rect x="337" y="48" width="8" height="11"/>
<path d="M355 48 h4 v-2 h3 v2 h4 v6 M355 48 v11 h6"/><rect x="361" y="52" width="8" height="7" fill="#808080"/>
<path d="M378 46 L391 59 M391 46 L378 59" stroke-width="2.500"/>
<path d="M415 44 l7 7 -7 7 -7-7 z" stroke-dasharray="2 1"/>
<path d="M443 46 a7 7 0 1 1 -6 10 M434 46 l5 3"/>
<path d="M464 52 h9 a4 4 0 1 1 0 5 h-4 M464 52 l4-4 v8"/>
</g>
<text x="492" y="51" font-family="Liberation Sans" font-size="8" font-weight="bold" fill="#808080">E,N</text>
<path d="M506 44 v5 M504 46 h5" stroke="#000080"/><path d="M496 58 h11 M508 50 v8" stroke="#000" stroke-dasharray="1 1"/><circle cx="495" cy="58" r="2" fill="#ff0" stroke="#000080"/>
<rect x="516" y="44" width="11" height="9" fill="#fff" stroke="#000"/><path d="M518 48 l2 2 4-4" stroke="#008000" fill="none"/><path d="M532 46 L524 55" stroke="#a000a0" stroke-width="3"/><circle cx="529" cy="58" r="2.500" fill="#c0c0c0" stroke="#000"/><path d="M516 58 h8" stroke="#00c" stroke-width="1.500"/>
<path d="M540 44 V60 M540 60 L553 46" stroke="#000080" stroke-width="1.500" fill="none"/><path d="M543 59 L552 52 V59 Z" fill="#c8a000" stroke="#000"/><circle cx="553" cy="46" r="2" fill="#c00000"/><circle cx="546" cy="52" r="2" fill="#c00000"/>
<path d="M562 57 L574 45 L578 48 L566 60 Z" fill="#ffff60" stroke="#000"/><path d="M565 53 L577 43" stroke="#000080"/>
<!-- view icons -->
<path d="M595 48 L604 45 L609 48 V55 L600 59 H594 Z" fill="#fff" stroke="#000" stroke-dasharray="2 1"/><circle cx="597" cy="54" r="2.500" fill="#008000"/><circle cx="603" cy="50" r="2" fill="#00a0a0"/><path d="M603 55 l3 2" stroke="#808000" stroke-width="2"/>
<rect x="617" y="46" width="13" height="13" fill="#fff" stroke="#000" stroke-dasharray="2 1"/><rect x="619" y="48" width="9" height="9" fill="none" stroke="#0000c0" stroke-width="1.500"/><circle cx="618" cy="46" r="1.500" fill="#e00000"/><circle cx="629" cy="48" r="1.500" fill="#e00000"/><circle cx="629" cy="58" r="1.500" fill="#e00000"/>
<rect x="639" y="49" width="11" height="11" fill="#fff" stroke="#404040"/><rect x="642" y="46" width="11" height="11" fill="none" stroke="#404040" stroke-dasharray="2 1"/><path d="M638 46 h6 M640 44 l3 2" stroke="#000080" stroke-width="2"/>
<rect x="662" y="51" width="12" height="8" fill="#80e0f0" stroke="#000080"/><path d="M665 47 L678 45" stroke="#e00000" stroke-dasharray="2 1"/><rect x="674" y="46" width="4" height="4" fill="#a0a0a0"/>
<path d="M687 50 L693 46 H700 V53 L694 58 H687 Z" fill="#fff" stroke="#000"/><g fill="#000080"><rect x="684" y="49" width="3" height="3"/><rect x="693" y="44" width="3" height="3"/><rect x="699" y="44" width="3" height="3"/><rect x="684" y="57" width="3" height="3"/><rect x="692" y="57" width="3" height="3"/><rect x="699" y="51" width="3" height="3"/></g>
<path d="M710 46 L722 51 V59 L712 55 Z" fill="#fff" stroke="#000080" stroke-width="2"/><rect x="708" y="44" width="3" height="3" fill="#000080"/><rect x="719" y="47" width="3" height="3" fill="#c00000"/><rect x="719" y="56" width="3" height="3" fill="#c00000"/>
<rect x="732" y="46" width="13" height="13" fill="#fff" stroke="#000080" stroke-width="1.500"/><rect x="732" y="46" width="13" height="2" fill="#000080"/><ellipse cx="738" cy="53" rx="4" ry="3" fill="none" stroke="#000080"/><path d="M738 48 v9" stroke="#000080"/>
<rect x="753" y="45" width="13" height="11" fill="#fff" stroke="#000" stroke-dasharray="2 1"/><rect x="759" y="52" width="9" height="6" fill="#ffe040" stroke="#000"/>
<circle cx="803" cy="50" r="6" fill="#a0e8f0" stroke="#000" stroke-width="1.500"/><path d="M807 54 L814 60" stroke="#000" stroke-width="2.500"/>
<path d="M828 43 l3 4 h-2 v4 h5 v-2 l4 3-4 3 v-2 h-5 v4 h2 l-3 4 -3-4 h2 v-4 h-5 v2 l-4-3 4-3 v2 h5 v-4 h-2 z" fill="#5c90b0" stroke="#404060"/>
<rect x="844" y="46" width="14" height="12" fill="#fff" stroke="#000080"/><rect x="844" y="46" width="14" height="2" fill="#000080"/><circle cx="851" cy="53" r="3.500" fill="#a0e0e0" stroke="#000"/><path d="M853 56 L857 60" stroke="#000" stroke-width="1.500"/>
<rect x="867" y="46" width="14" height="13" fill="#fff" stroke="#000" stroke-width="1.500"/><rect x="867" y="46" width="14" height="2" fill="#000080"/><path d="M870 50 l3 3 -3 3 M878 50 l-3 3 3 3" stroke="#000080" fill="none" stroke-width="1.500"/>
<rect x="890" y="46" width="12" height="10" fill="#fff" stroke="#000"/><path d="M898 48 L905 48 L908 56 L902 60 L897 56 Z" fill="#fff" stroke="#000"/><path d="M900 49 v4 M903 49 v4" stroke="#808080"/>
<path d="M924 48 a4.500 4 0 1 1 6 4 l-1.500 2 M928.500 56 v2" stroke="#000" stroke-width="3.500" fill="none"/><path d="M924 48 a4.500 4 0 1 1 6 4 l-1.500 2 M928.500 56 v2" stroke="#ffff00" stroke-width="1.600" fill="none"/>
<!-- select arrow -->
<path d="M9 113 V128 L12 125 L15 132 L17 131 L14 124 H18 Z" fill="#fff" stroke="#000"/>

<!-- tree lines -->
<g stroke="#808080">
<path d="M1518 170 V735"/><path d="M1502 159 H1512"/>
<path d="M1522 175 H1532 M1522 191 H1532 M1522 207 H1532 M1522 223 H1532 M1522 239 H1532 M1522 255 H1532 M1522 271 H1532 M1522 287 H1532 M1522 303 H1532 M1522 319 H1532 M1522 335 H1532 M1522 351 H1532 M1522 367 H1532 M1522 383 H1532 M1522 399 H1532 M1522 415 H1532 M1522 431 H1532 M1522 447 H1532 M1522 463 H1532 M1522 479 H1532 M1522 495 H1532 M1522 511 H1532 M1522 527 H1532 M1522 543 H1532 M1522 559 H1532 M1522 575 H1532 M1522 591 H1532 M1522 607 H1532 M1522 623 H1532 M1522 639 H1532 M1522 655 H1532 M1522 671 H1532 M1522 687 H1532 M1522 703 H1532 M1522 719 H1532 M1522 735 H1532"/>
</g>
<g>
<rect x="1494.500" y="155.500" width="8" height="8" fill="#fff" stroke="#808080"/><path d="M1496 159.500 H1501" stroke="#000"/>
<use href="#pl" x="1513.500" y="170.500"/><use href="#pl" x="1513.500" y="186.500"/><use href="#pl" x="1513.500" y="202.500"/><use href="#pl" x="1513.500" y="218.500"/><use href="#pl" x="1513.500" y="234.500"/><use href="#pl" x="1513.500" y="250.500"/><use href="#pl" x="1513.500" y="266.500"/><use href="#pl" x="1513.500" y="282.500"/><use href="#pl" x="1513.500" y="298.500"/><use href="#pl" x="1513.500" y="314.500"/><use href="#pl" x="1513.500" y="330.500"/><use href="#pl" x="1513.500" y="346.500"/><use href="#pl" x="1513.500" y="362.500"/><use href="#pl" x="1513.500" y="378.500"/><use href="#pl" x="1513.500" y="394.500"/><use href="#pl" x="1513.500" y="410.500"/><use href="#pl" x="1513.500" y="426.500"/><use href="#pl" x="1513.500" y="442.500"/><use href="#pl" x="1513.500" y="458.500"/><use href="#pl" x="1513.500" y="474.500"/><use href="#pl" x="1513.500" y="490.500"/><use href="#pl" x="1513.500" y="506.500"/><use href="#pl" x="1513.500" y="522.500"/><use href="#pl" x="1513.500" y="538.500"/><use href="#pl" x="1513.500" y="554.500"/><use href="#pl" x="1513.500" y="570.500"/><use href="#pl" x="1513.500" y="586.500"/><use href="#pl" x="1513.500" y="602.500"/><use href="#pl" x="1513.500" y="618.500"/><use href="#pl" x="1513.500" y="634.500"/><use href="#pl" x="1513.500" y="650.500"/><use href="#pl" x="1513.500" y="666.500"/><use href="#pl" x="1513.500" y="682.500"/><use href="#pl" x="1513.500" y="698.500"/><use href="#pl" x="1513.500" y="714.500"/><use href="#pl" x="1513.500" y="730.500"/>
</g>
<!-- root folder -->
<path d="M1512 154 h5 l2 2 h7 v11 h-14 z" fill="#ffff60" stroke="#808080"/><rect x="1519" y="160" width="7" height="8" fill="#fff" stroke="#000"/>
<!-- A2, CS, CS_0 -->
<path d="M1532 170 h5 l2 2 h7 v11 h-14 z" fill="#e0d060" stroke="#808080"/><rect x="1535" y="174" width="9" height="9" fill="#fff" stroke="#000" stroke-width="1.500"/><rect x="1537" y="176" width="5" height="5" fill="#c00000"/>
<path d="M1532 186 h5 l2 2 h7 v11 h-14 z" fill="#ffff60" stroke="#808080"/><path d="M1534 197 L1543 186 L1548 192 L1540 200 Z" fill="#e8e8e8" stroke="#808080" stroke-dasharray="1 1"/>
<path d="M1539 199 V210 M1532 210 H1546" stroke="#0000c0" stroke-width="1.500"/><path d="M1539 198 l-3 4 h6 z" fill="#0000c0"/><circle cx="1539" cy="211" r="2" fill="none" stroke="#0000c0"/>
<text x="1541" y="206" font-family="Liberation Sans" font-size="7" font-weight="bold" fill="#008080">El</text>
<text x="1531" y="217" font-family="Liberation Sans" font-size="7" font-weight="bold" fill="#008080">N</text>
<text x="1542" y="217" font-family="Liberation Sans" font-size="7" font-weight="bold" fill="#008080">E</text>
<!-- equipment icons -->
<use href="#eq" x="1532" y="215"/><use href="#eq" x="1532" y="231"/><use href="#eq" x="1532" y="247"/><use href="#eq" x="1532" y="263"/><use href="#eq" x="1532" y="279"/><use href="#eq" x="1532" y="295"/><use href="#eq" x="1532" y="311"/><use href="#eq" x="1532" y="327"/><use href="#eq" x="1532" y="343"/><use href="#eq" x="1532" y="359"/><use href="#eq" x="1532" y="375"/><use href="#eq" x="1532" y="391"/><use href="#eq" x="1532" y="407"/><use href="#eq" x="1532" y="423"/><use href="#eq" x="1532" y="439"/><use href="#eq" x="1532" y="455"/><use href="#eq" x="1532" y="471"/><use href="#eq" x="1532" y="487"/><use href="#eq" x="1532" y="503"/><use href="#eq" x="1532" y="519"/><use href="#eq" x="1532" y="535"/>
<use href="#lad" x="1536" y="553"/><use href="#lad" x="1536" y="569"/>
<use href="#eq" x="1532" y="583"/><use href="#eq" x="1532" y="599"/><use href="#eq" x="1532" y="615"/><use href="#eq" x="1532" y="631"/>
<use href="#sl" x="1532" y="647"/><use href="#sl" x="1532" y="663"/>
<use href="#hr" x="1531" y="680"/><use href="#hr" x="1531" y="696"/><use href="#hr" x="1531" y="712"/><use href="#hr" x="1531" y="728"/>
<!-- scrollbar arrows -->
<path d="M1498 952 v6 l-3-3 z M1664 952 v6 l3-3 z" fill="#000"/>
<!-- start flag -->
<path d="M6 1030 l5-1 v5 l-5 1 z" fill="#e04020"/><path d="M12 1029 l5-1 v5 l-5 1 z" fill="#40a020"/><path d="M6 1036 l5-1 v5 l-5 1 z" fill="#3060d0"/><path d="M12 1035 l5-1 v5 l-5 1 z" fill="#f0c020"/>
<!-- quick launch -->
<circle cx="76" cy="1036" r="7" fill="none" stroke="#2878d0" stroke-width="3"/><path d="M69 1036 h14" stroke="#2878d0" stroke-width="2"/><path d="M69 1043 Q78 1038 84 1029" stroke="#e0a040" fill="none"/>
<rect x="92" y="1029" width="13" height="14" rx="3" fill="#fff" stroke="#2878d0" stroke-width="2"/><path d="M96 1032 a4 4 0 1 0 5 7" stroke="#2070c0" fill="none" stroke-width="1.500"/><circle cx="105" cy="1031" r="2" fill="#e06020"/>
<!-- task icons -->
<g transform="translate(151,1026)"><use href="#logo"/></g>
<rect x="315" y="1027" width="17" height="17" fill="#000"/><rect x="317" y="1035" width="10" height="7" fill="#80e0f0"/><path d="M320 1034 L330 1029" stroke="#e04040" stroke-width="2" stroke-dasharray="2 1"/>
<!-- keyboard etc. -->
<path d="M1172 1032 L1180 1030 L1188 1034 L1186 1042 L1178 1042 L1172 1037 Z" fill="#b0b8e8" stroke="#6070a0"/><path d="M1176 1030 Q1178 1026 1176 1024" fill="none" stroke="#8090b0"/>
<rect x="1199" y="1027" width="6" height="4" fill="none" stroke="#000"/><rect x="1197" y="1030" width="6" height="4" fill="#c0c0c0" stroke="#000"/><path d="M1198 1040 h6 l-3 3 z" fill="#000"/>
<!-- tray -->
<rect x="1545" y="1031" width="9" height="10" fill="#00a040"/><rect x="1552" y="1028" width="6" height="6" fill="#20c050"/><circle cx="1556" cy="1039" r="5" fill="#0000a0"/><rect x="1546" y="1041" width="8" height="3" fill="#c0c0c0"/>
<path d="M1565 1029 Q1570 1027 1575 1029 V1037 Q1573 1043 1570 1044 Q1567 1043 1565 1037 Z" fill="#f0d020" stroke="#405080"/><rect x="1569" y="1031" width="2" height="6" fill="#000"/><rect x="1569" y="1039" width="2" height="2" fill="#000"/>
<rect x="1582" y="1034" width="9" height="7" fill="#505890"/><rect x="1588" y="1029" width="9" height="7" fill="#303870"/><rect x="1583" y="1042" width="9" height="2" fill="#a0a0a0"/>
<rect x="1600" y="1029" width="13" height="13" fill="#fff" stroke="#003080" stroke-width="1.500"/><rect x="1603" y="1032" width="7" height="7" fill="none" stroke="#003080"/><path d="M1610 1045 L1613 1038 L1616 1045 Z" fill="#ffe000" stroke="#000"/>
</svg>

<!-- text -->
<span class="t w" style="left:20px;top:2px">final.ses : Common : SP3DTrain : U01 - [GraphicView:1 - Looking North (0°  from N ) and 0°  ]</span>
<span class="t" style="left:26px;top:22px"><u>F</u>ile</span>
<span class="t" style="left:62px;top:22px"><u>E</u>dit</span>
<span class="t" style="left:98px;top:22px"><u>V</u>iew</span>
<span class="t" style="left:134px;top:22px"><u>I</u>nsert</span>
<span class="t" style="left:182px;top:22px">F<u>o</u>rmat</span>
<span class="t" style="left:230px;top:22px"><u>T</u>ools</span>
<span class="t" style="left:272px;top:22px"><u>P</u>roject</span>
<span class="t" style="left:326px;top:22px">Sma<u>r</u>tPlant</span>
<span class="t" style="left:398px;top:22px">Tas<u>k</u>s</span>
<span class="t" style="left:440px;top:22px"><u>W</u>indow</span>
<span class="t" style="left:488px;top:22px"><u>H</u>elp</span>
<span class="t" style="left:9px;top:45px">Admin</span>
<span class="t w" style="left:1490px;top:106px">Workspace Explorer</span>

<span class="t" style="left:1529px;top:153px">SP3DTrain</span>
<div style="position:absolute;left:1492px;top:156px;width:180px;height:793px;overflow:hidden">
<span class="t" style="left:58px;top:13px">A2</span>
<span class="t" style="left:58px;top:29px">CS</span>
<span class="t" style="left:58px;top:45px">CS_0</span>
<span class="t" style="left:58px;top:61px">E210SimVCylEqpSkirtAsm</span>
<span class="t" style="left:58px;top:77px">E210SimVCylEqpSkirtAsm</span>
<span class="t" style="left:58px;top:93px">HCPump0111/2"x1"-E-1-</span>
<span class="t" style="left:58px;top:109px">HCPump0111/2"x1"-E-1-</span>
<span class="t" style="left:58px;top:125px">HCPump0111/2"x1"-E-1-</span>
<span class="t" style="left:58px;top:141px">HCPump0111/2"x1"-E-1-</span>
<span class="t" style="left:58px;top:157px">HCPump0111/2"x1"-E-1-</span>
<span class="t" style="left:58px;top:173px">HCPump0111/2"x1"-E-1-</span>
<span class="t" style="left:58px;top:189px">HCPump0111/2"x1"-E-1-</span>
<span class="t" style="left:58px;top:205px">HCPump0111/2"x1"-E-1-</span>
<span class="t" style="left:58px;top:221px">HCPump0111/2"x1"-E-1-</span>
<span class="t" style="left:58px;top:237px">HCPump0111/2"x1"-E-1-</span>
<span class="t" style="left:58px;top:253px">HCPump0111/2"x1"-E-1-</span>
<span class="t" style="left:58px;top:269px">HCPump0111/2"x1"-E-1-</span>
<span class="t" style="left:58px;top:285px">HCPump0111/2"x1"-E-1-</span>
<span class="t" style="left:58px;top:301px">HCPump0111/2"x1"-E-1-</span>
<span class="t" style="left:58px;top:317px">HCPump0111/2"x1"-E-1-</span>
<span class="t" style="left:58px;top:333px">HEXCH001A-E-1-0004</span>
<span class="t" style="left:58px;top:349px">HEXCH001A-E-1-0005</span>
<span class="t" style="left:58px;top:365px">HoriShellTubeExchanger</span>
<span class="t" style="left:58px;top:381px">HoriShellTubeExchanger</span>
<span class="t" style="left:58px;top:397px">LadderA1-1-0102</span>
<span class="t" style="left:58px;top:413px">LadderA1-1-0103</span>
<span class="t" style="left:58px;top:429px">SimpleVerticalCylindric</span>
<span class="t" style="left:58px;top:445px">SimpleVerticalCylindric</span>
<span class="t" style="left:58px;top:461px">SimpleVerticalCylindric</span>
<span class="t" style="left:58px;top:477px">SimpleVerticalCylindric</span>
<span class="t" style="left:58px;top:493px">Slab-1-0301</span>
<span class="t" style="left:58px;top:509px">Slab-1-0401</span>
<span class="t" style="left:58px;top:525px">TMHandrail-1-0001</span>
<span class="t" style="left:58px;top:541px">TMHandrail-1-0002</span>
<span class="t" style="left:58px;top:557px">TMHandrail-1-0101</span>
<span class="t" style="left:58px;top:573px">TMHandrail-1-0102</span>
</div>

<span class="t" style="left:1492px;top:980px">System</span>
<span class="t" style="left:1540px;top:978px">Space</span>
<span class="t" style="left:1582px;top:978px">WBS</span>
<span class="t" style="left:6px;top:1002px">Left click =  Zoom Area, Left drag = Dynamic Zoom, Shift-middle click = Zoom Out, Middle drag = Pan, middle-click = Zoom In, Shift-middle drag = dynamic pan, Right click = Kill command</span>
<span class="t" style="left:1494px;top:1002px">9/29/2010</span>
<span class="t" style="left:1590px;top:1002px">6:56 PM</span>
<span class="t" style="left:1624px;top:1029px">6:56 PM</span>
<span class="t bd" style="left:172px;top:1029px">final.ses : Com...</span>
<span class="t" style="left:334px;top:1028px">Active View Control...</span>
<span class="t w" style="left:1145px;top:1029px">CH</span>
<span style="position:absolute;left:21px;top:1028px;font:bold 14px/16px 'Noto Sans CJK SC',sans-serif;color:#000">开始</span>
</body></html>
